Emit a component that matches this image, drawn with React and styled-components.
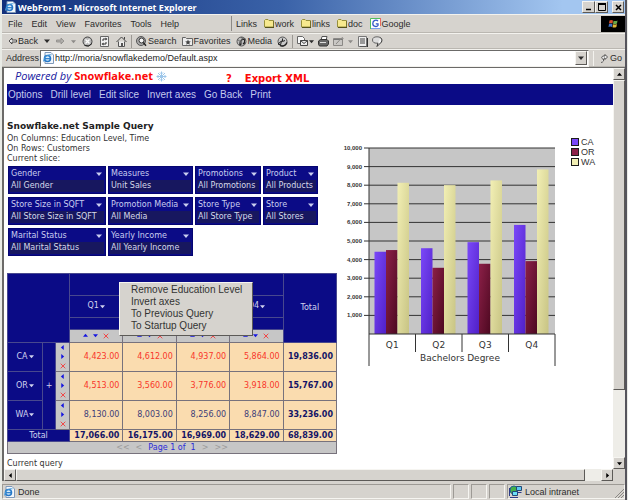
import React from 'react'
import styled, { createGlobalStyle, css } from 'styled-components'

const UI_FONT = '"Liberation Sans", Arial, sans-serif'
const PAGE_FONT = '"DejaVu Sans", Verdana, sans-serif'
const FACE = '#d6d3ce'
const NAVY = '#0b0b86'

const GlobalStyle = createGlobalStyle`
  * { box-sizing: border-box; }
  body { margin: 0; background: #e9ebe6; }
  button, input { font: inherit; color: inherit; margin: 0; padding: 0; border: 0; background: none; }
  a { color: inherit; text-decoration: none; }
`

const raised = css`
  background: ${FACE};
  border: 1px solid;
  border-color: #f6f5f1 #5c5a57 #5c5a57 #f6f5f1;
`

const Window = styled.div`
  display: flex;
  flex-direction: column;
  min-height: 100vh;
  margin: 0 1px 0 2px;
  background: ${FACE};
  border: solid #55545c;
  border-width: 0 2px 1px 0;
  font: 9px/12px ${UI_FONT};
  color: #2c2c2c;
`

const TitleBar = styled.header`
  display: flex;
  align-items: center;
  gap: 2px;
  height: 14px;
  padding: 0 1px 0 3px;
  background: linear-gradient(90deg, #12307c, #3a62a8 45%, #a3c6f0 90%);
  color: #fff;
  h1 {
    flex: 1;
    margin: 0;
    font: bold 9px/13px "Open Sans", Tahoma, sans-serif;
  }
`

const CaptionButton = styled.button`
  ${raised}
  width: ${p => (p.$spaced ? 12 : 13)}px;
  height: 12px;
  margin-left: ${p => (p.$spaced ? 2 : -2)}px;
  color: #000;
  svg { display: block; margin: auto; }
`

const Bar = styled.div`
  display: flex;
  align-items: center;
  height: ${p => p.$height}px;
  padding-left: ${p => p.$pad || 0}px;
  border-top: 1px solid #f3f2ee;
  border-bottom: 1px solid #bab7b1;
`

const MenuList = styled.nav`
  display: flex;
  width: 226px;
  gap: 9px;
  padding-left: 3px;
`

const LinksBar = styled.nav`
  display: flex;
  flex: 1;
  align-items: center;
  gap: 7px;
  height: 15px;
  padding-left: 4px;
  border-left: 1px solid #8c8a86;
`

const QuickLink = styled.a`
  display: flex;
  align-items: center;
  gap: 1px;
`

const Throbber = styled.div`
  display: flex;
  align-items: center;
  justify-content: center;
  width: 24px;
  height: 16px;
  background: #000;
`

const ToolGroup = styled.div`
  display: flex;
  align-items: center;
  gap: ${p => p.$gap}px;
  height: 13px;
  padding: 0 4px;
  & + & { border-left: 1px solid #9b9893; }
`

const ToolButton = styled.button`
  display: flex;
  align-items: center;
  gap: 1px;
  color: ${p => (p.disabled ? '#8d8b88' : 'inherit')};
`

const AddressBox = styled.div`
  display: flex;
  flex: 1;
  align-items: center;
  height: 17px;
  margin: 0 4px 0 1px;
  padding: 1px 1px 1px 2px;
  background: #fff;
  border: 1px solid;
  border-color: #6b6a68 #f3f2ee #f3f2ee #6b6a68;
  input {
    flex: 1;
    min-width: 0;
    margin-left: 1px;
    color: #222;
    outline: 0;
  }
`

const SquareButton = styled.button`
  ${raised}
  display: flex;
  flex: none;
  align-items: center;
  justify-content: center;
  width: 12px;
  height: ${p => p.$tall ? 14 : 12}px;
`

const GoButton = styled.button`
  display: flex;
  align-items: center;
  gap: 2px;
  width: 32px;
  height: 15px;
  padding-left: 6px;
  border-left: 1px solid #f3f2ee;
`

const Viewport = styled.div`
  display: grid;
  grid-template-columns: minmax(0, 1fr) 12px;
  grid-template-rows: 1fr 12px;
  flex: 1;
  border: solid #6b6a68;
  border-width: 1px 0 0 2px;
`

const Page = styled.main`
  padding-left: 3px;
  overflow: hidden;
  background: #fff;
  color: #333;
  font: 8px/10px ${PAGE_FONT};
`

const ScrollTrack = styled.div`
  display: flex;
  flex-direction: ${p => (p.$vertical ? 'column' : 'row')};
  background: #eeede8;
`

const ScrollThumb = styled.div`
  ${raised}
  flex: ${p => p.$size};
`

const ScrollRest = styled.div`
  flex: ${p => p.$size};
`

const StatusBar = styled.footer`
  display: flex;
  gap: 2px;
  height: 19px;
  padding: 3px 0 1px;
`

const StatusCell = styled.div`
  display: flex;
  flex: ${p => (p.$width ? `0 0 ${p.$width}px` : 1)};
  align-items: center;
  gap: 3px;
  padding-left: 1px;
  border: 1px solid;
  border-color: #9d9a95 #f6f5f1 #f6f5f1 #9d9a95;
`

const Grip = styled.svg`
  align-self: flex-end;
  margin-left: auto;
`

const BrandRow = styled.div`
  display: flex;
  height: 16px;
  color: #fc0808;
  font-weight: bold;
`

const Brand = styled.div`
  display: flex;
  align-items: center;
  gap: 3px;
  width: 219px;
  padding-left: 8px;
  font: bold 11px/16px "Open Sans", Tahoma, sans-serif;
  i {
    color: #1818a0;
    font-weight: normal;
  }
`

const BrandLink = styled.a`
  align-self: flex-end;
  margin-right: 13px;
  font-size: 10px;
  line-height: 11px;
`

const NavBar = styled.nav`
  display: flex;
  align-items: center;
  gap: 8px;
  height: 21px;
  padding-left: 1px;
  background: ${NAVY};
  color: #c3c9ee;
  font: 10px/12px ${UI_FONT};
`

const Columns = styled.div`
  display: flex;
  align-items: flex-start;
`

const QueryColumn = styled.section`
  flex: none;
  width: 330px;
  padding-top: 14px;
  h2 {
    margin: 0;
    color: #222;
    font-size: 9px;
    line-height: 15px;
  }
  p { margin: 0; }
`

const SliceGrid = styled.div`
  display: grid;
  grid-template-columns: 98px 85px 66px 55px;
  gap: 3px 2px;
  margin: 2px 0 17px 1px;
`

const SliceButton = styled.button`
  height: 28px;
  padding: 1px;
  background: ${NAVY};
  border: 1px solid #050570;
  color: #c9cdf0;
  text-align: left;
  white-space: nowrap;
  span {
    display: flex;
    align-items: center;
    justify-content: space-between;
    gap: 4px;
    height: 12px;
    padding-left: 1px;
  }
  span:first-child svg { margin-right: 2px; }
  span:last-child {
    background: #17175f;
    color: #d6d8ea;
  }
`

const PivotWrap = styled.div`
  position: relative;
`

const Pivot = styled.table`
  width: 100%;
  table-layout: fixed;
  border-collapse: collapse;
  th, td {
    padding: 0;
    border: 1px solid #77727c;
    line-height: 10px;
  }
  th {
    background: ${NAVY};
    border-color: #48488e;
    color: #d0d2ee;
    font-weight: normal;
  }
`

const Row = styled.tr`
  height: ${p => p.$height}px;
`

const MemberButton = styled.button`
  display: inline-flex;
  align-items: center;
  gap: 1px;
  vertical-align: middle;
`

const Num = styled.td`
  && { padding-right: 3px; }
  background: #fadcaf;
  color: ${p => (p.$low ? '#f8362a' : '#3c3c78')};
  text-align: right;
`

const Sum = styled(Num)`
  color: #141466;
  font-weight: bold;
`

const ToolCell = styled.td`
  background: #c6c6c6;
  div {
    display: flex;
    flex-direction: ${p => (p.$vertical ? 'column' : 'row')};
    align-items: center;
    justify-content: center;
    gap: ${p => (p.$vertical ? 3 : 5)}px;
  }
  button { display: block; line-height: 6px; }
`

const PagerCell = styled.td`
  background: #c6c6c6;
  color: #2c2cd8;
  div {
    display: flex;
    justify-content: center;
    gap: 6px;
  }
  button { color: #9b9b9b; }
`

const ContextMenu = styled.ul`
  ${raised}
  position: absolute;
  top: 9px;
  left: 112px;
  width: 134px;
  margin: 0;
  padding: 1px 0 3px 11px;
  color: #333;
  font: 10px/12px ${UI_FONT};
  list-style: none;
  li { height: 12px; }
`

const ChartArea = styled.figure`
  display: flex;
  flex: none;
  gap: 13px;
  margin: 31px 0 0 5px;
  svg { display: block; }
`

const Legend = styled.ul`
  margin: 0;
  padding: 1px 0 0;
  font: 9px/10px ${UI_FONT};
  list-style: none;
  li {
    display: flex;
    align-items: center;
    gap: 2px;
    height: 10px;
  }
`

const Swatch = styled.i`
  width: 8px;
  height: 8px;
  background: ${p => p.$color};
  border: 1px solid #1c1c1c;
`

const FinalLine = styled.p`
  && { margin-top: 5px; }
`

const Arrow = ({ dir = 'down', size = 5, color = 'currentColor' }) => {
  const turn = { down: 0, left: 90, up: 180, right: 270 }[dir]
  return (
    <svg width={size} height={size} viewBox='0 0 6 6' aria-hidden='true'>
      <path d='M0 1.5h6l-3 3.5z' fill={color} transform={`rotate(${turn} 3 3)`} />
    </svg>
  )
}

const Cross = () => (
  <svg width='6' height='6' viewBox='0 0 6 6' aria-hidden='true'>
    <path d='M.7.7l4.6 4.6M5.3.7L.7 5.3' stroke='#f04848' strokeWidth='1' />
  </svg>
)

const PageIcon = () => (
  <svg width='11' height='12' viewBox='0 0 11 12' aria-hidden='true'>
    <path d='M2 .5h6l2.5 2.5v8.5H2z' fill='#f2f7fc' stroke='#7f98b8' />
    <circle cx='4.5' cy='6.5' r='3' fill='#d9edfa' stroke='#2478c8' strokeWidth='1.6' />
    <path d='M2 6.7h5.5' stroke='#2478c8' strokeWidth='1.2' />
    <path d='M.5 9.5C1 5 5 2 8.5 2.8' fill='none' stroke='#4da0dc' />
  </svg>
)

const Folder = () => (
  <svg width='10' height='9' viewBox='0 0 10 9' aria-hidden='true'>
    <path d='M.5 8V1.5l1-1h2.5l1 1h4.5V8z' fill='#f7e98e' stroke='#97903c' />
    <path d='M1 8.5h9V2' fill='none' stroke='#55511c' />
  </svg>
)

const GoogleIcon = () => (
  <svg width='11' height='11' viewBox='0 0 11 11' aria-hidden='true'>
    <path d='M.5 11V.5H10' fill='none' stroke='#4fc05c' />
    <path d='M10.5 0v8' stroke='#e86a60' />
    <path d='M1 10.5h9.5' stroke='#7aa0ee' />
    <rect x='1' y='1' width='9' height='9' fill='#fff' />
    <path d='M8 3.2C6.5 1.3 2.8 1.9 2.8 5.500S7 9 8 7.500V5.800H5.800' fill='none' stroke='#3058c8' strokeWidth='1.3' />
  </svg>
)

const WindowsLogo = () => (
  <svg width='12' height='10' viewBox='0 0 12 10' aria-hidden='true'>
    <path d='M2.5 1.5Q4 .6 6 1.5L5.5 4.5Q3.8 3.7 2 4.5z' fill='#d8502c' />
    <path d='M6.6 1.7Q8.5 2.5 10.5 1.5L10 4.5Q8 5.4 6 4.7z' fill='#68a848' />
    <path d='M2 5Q3.7 4.2 5.4 5L5 8Q3.2 7.2 1.5 8z' fill='#3f74c8' />
    <path d='M6 5.2Q8 6 9.900 5L9.400 8Q7.500 8.900 5.500 8.200z' fill='#e0b838' />
  </svg>
)

const LeftArrow = ({ flip }) => (
  <svg width='9' height='8' viewBox='0 0 9 8' aria-hidden='true'>
    <path
      d='M4 1L1 4l3 3V5h4.5V3H4z' fill={flip ? '#b0aeab' : '#e8e8e8'} stroke='currentColor' strokeWidth='.8'
      transform={flip ? 'rotate(180 4.5 4)' : undefined}
    />
  </svg>
)

const icons = {
  stop: (
    <>
      <circle cx='5.5' cy='5.5' r='4.5' fill='#b9b9b9' stroke='#444' />
      <path d='M3.5 3.5l4 4M7.5 3.5l-4 4' stroke='#fff' strokeWidth='1.3' />
      <path d='M2.5 9.5Q7 11.5 10 7.5' fill='none' stroke='#222' />
    </>
  ),
  refresh: (
    <>
      <path d='M1.5.5h8v10h-8z' fill='#f1f1f1' stroke='#666' />
      <path d='M7 3H4v2M4 8h3V6' fill='none' stroke='#333' />
      <path d='M6.5 1.5L8.5 3 6.5 4.5zM4.5 6.5v3L2.5 8z' fill='#333' />
    </>
  ),
  home: (
    <>
      <path d='M2.5 5.5v5h6v-5' fill='#eee' stroke='#555' />
      <path d='M.5 6L5.5 1l5 5M8.5 3.5V1' fill='none' stroke='#444' />
      <path d='M5 7h2v3.5H5z' fill='#555' />
    </>
  ),
  search: (
    <>
      <circle cx='5' cy='5' r='4.5' fill='#aaa' stroke='#555' />
      <circle cx='5.5' cy='4.5' r='2.5' fill='#f4f4f4' stroke='#333' />
      <path d='M7.3 6.5L10 9.8' stroke='#222' strokeWidth='1.4' />
    </>
  ),
  favorites: (
    <>
      <path d='M.5 9.5v-8h3l1 1h6v7z' fill='#ececec' stroke='#666' />
      <path d='M6 3.5l.8 1.8 2 .2-1.5 1.2.5 2L6 7.7l-1.8 1 .5-2-1.5-1.2 2-.2z' fill='#444' />
    </>
  ),
  media: (
    <>
      <circle cx='5.5' cy='5.5' r='4.5' fill='#bdbdbd' stroke='#555' />
      <path d='M2 3.5Q5 5 3.5 8.5M5 1.5Q7 3 9.5 3' fill='none' stroke='#555' />
      <path d='M5 8.5V4l3.5-.7v4' fill='none' stroke='#222' />
      <circle cx='4.3' cy='8.5' r='1' fill='#222' />
      <circle cx='7.8' cy='7.5' r='1' fill='#222' />
    </>
  ),
  history: (
    <>
      <circle cx='5.5' cy='5.5' r='4.5' fill='#c9c9c9' stroke='#555' />
      <path d='M5.5 2.5v3l2.5-1M1 8L4.5 5l-1 4z' fill='none' stroke='#222' />
      <path d='M3 9.7Q8 11 10 6.5' fill='none' stroke='#222' strokeWidth='1.3' />
    </>
  ),
  mail: (
    <>
      <path d='M.5.5h5l2 2v5h-7z' fill='#fafafa' stroke='#666' />
      <path d='M3.5 4.5h7v5h-7z' fill='#ececec' stroke='#444' />
      <path d='M3.5 4.5L7 7.5l3.5-3' fill='none' stroke='#444' />
    </>
  ),
  print: (
    <>
      <path d='M3 4.5l1-4h5l-1 4' fill='#fff' stroke='#555' />
      <path d='M.5 5l2-1.5h6.5L10.5 5v3l-1.5 2H1.5L.5 8.5z' fill='#666' stroke='#333' />
      <path d='M2 6.5h6' stroke='#ddd' />
    </>
  ),
  edit: (
    <>
      <path d='M.5 2.5h9v7h-9z' fill='#c9c7c4' stroke='#8b8986' />
      <path d='M.5 3.5h9' stroke='#777' />
      <path d='M3 8l6-6.5 1.5 1' fill='none' stroke='#8b8986' />
    </>
  ),
  note: (
    <>
      <path d='M1.5.5h8v10h-8z' fill='#eee' stroke='#777' />
      <path d='M3 3h5M3 5h5M3 7h5' stroke='#444' />
      <path d='M10.5 2v9H3' fill='none' stroke='#333' />
    </>
  ),
  talk: (
    <>
      <ellipse cx='5' cy='4' rx='4.5' ry='3.2' fill='#ddd' stroke='#666' />
      <path d='M6 7l-1 3.5L9.5 6Q11 4 8.5 1.5' fill='#f3f3f3' stroke='#333' />
    </>
  )
}

const ToolIcon = ({ name }) => (
  <svg width='11' height='11' viewBox='0 0 11 11' aria-hidden='true'>{icons[name]}</svg>
)

const Snowflake = () => (
  <svg width='11' height='11' viewBox='0 0 11 11' aria-hidden='true'>
    <path
      d='M5.5.5v10M.5 5.5h10M2 2l7 7M9 2L2 9M4 1.5l1.5 1.5L7 1.5M4 9.5L5.5 8 7 9.5M1.5 4L3 5.5 1.5 7M9.5 4L8 5.5 9.5 7'
      fill='none' stroke='#9cc6ea' strokeWidth='1'
    />
  </svg>
)

const IntranetIcon = () => (
  <svg width='13' height='13' viewBox='0 0 13 13' aria-hidden='true'>
    <circle cx='5' cy='5' r='4' fill='#45b048' stroke='#206090' />
    <path d='M7.5 1.5h5v4h-5z' fill='#5cc8f0' stroke='#244878' />
    <path d='M3.5 6.5h5v4h-5z' fill='#6ce0f8' stroke='#244878' />
    <path d='M1 12.5h8M8 7.5h4.5M.5 3v8' stroke='#2c3c88' />
  </svg>
)

const menus = ['File', 'Edit', 'View', 'Favorites', 'Tools', 'Help']
const folders = ['work', 'links', 'doc']
const navItems = ['Options', 'Drill level', 'Edit slice', 'Invert axes', 'Go Back', 'Print']
const popupItems = ['Remove Education Level', 'Invert axes', 'To Previous Query', 'To Startup Query']

const slices = [
  ['Gender', 'All Gender'],
  ['Measures', 'Unit Sales'],
  ['Promotions', 'All Promotions'],
  ['Product', 'All Products'],
  ['Store Size in SQFT', 'All Store Size in SQFT'],
  ['Promotion Media', 'All Media'],
  ['Store Type', 'All Store Type'],
  ['Store', 'All Stores'],
  ['Marital Status', 'All Marital Status'],
  ['Yearly Income', 'All Yearly Income']
]

const quarters = ['Q1', 'Q2', 'Q3', 'Q4']
const rows = [
  { name: 'CA', values: [4423, 4612, 4937, 5864], total: 19836, low: true },
  { name: 'OR', values: [4513, 3560, 3776, 3918], total: 15767, low: true },
  { name: 'WA', values: [8130, 8003, 8256, 8847], total: 33236, low: false }
]
const totals = [17066, 16175, 16969, 18629, 68839]
const series = [
  { name: 'CA', from: '#7a48f8', to: '#5020c8' },
  { name: 'OR', from: '#8c2048', to: '#4c0820' },
  { name: 'WA', from: '#f2efb4', to: '#c8c484' }
]

const money = n => `${n.toLocaleString('en-US')}.00`

const Chart = () => {
  const left = 27
  const top = 12
  const height = 186
  const width = 186
  const bottom = top + height
  const group = width / quarters.length
  const bar = 11.5
  const ticks = Array.from({ length: 10 }, (_, i) => (i + 1) * 1000)
  const y = value => bottom - value * height / 10000
  return (
    <svg width='216' height='232' viewBox='0 0 216 232' role='img' aria-label='Bachelors Degree by quarter'>
      <defs>
        {series.map(s => (
          <linearGradient id={s.name} key={s.name} x1='0' y1='0' x2='1' y2='1'>
            <stop offset='0' stopColor={s.from} />
            <stop offset='1' stopColor={s.to} />
          </linearGradient>
        ))}
      </defs>
      <rect x={left} y={top} width={width} height={height} fill='#c6c6c6' />
      {ticks.map(t => (
        <g key={t}>
          <path d={`M${left - 5} ${y(t)}H${left + width}`} stroke='#333' />
          <text x={left - 7} y={y(t) + 2} textAnchor='end' fontSize='6' fontWeight='bold' fill='#333' fontFamily={UI_FONT}>
            {t.toLocaleString('en-US')}
          </text>
        </g>
      ))}
      {rows.map((row, r) => row.values.map((v, q) => (
        <rect
          key={row.name + q} fill={`url(#${row.name})`}
          x={left + q * group + 5.5 + r * bar} y={y(v)} width={bar} height={bottom - y(v)}
        />
      )))}
      <path d={`M${left} ${top}V${bottom + 32}M${left} ${bottom}h${width}v32`} fill='none' stroke='#333' />
      {quarters.map((q, i) => (
        <g key={q}>
          {i > 0 && <path d={`M${left + i * group} ${bottom}v18`} stroke='#333' />}
          <text x={left + (i + 0.5) * group} y={bottom + 14} textAnchor='middle' fontSize='9' fill='#333' fontFamily={PAGE_FONT}>{q}</text>
        </g>
      ))}
      <text x={left + width / 2 - 2} y={bottom + 27} textAnchor='middle' fontSize='9' fill='#333' fontFamily={PAGE_FONT}>Bachelors Degree</text>
    </svg>
  )
}

const PivotTable = () => (
  <PivotWrap>
    <Pivot>
      <colgroup>
        <col style={{ width: 35 }} />
        <col style={{ width: 13 }} />
        <col style={{ width: 14 }} />
        <col span='5' />
      </colgroup>
      <thead>
        <Row $height={22}>
          <th colSpan='3' rowSpan='4' />
          <th colSpan='4' />
          <th rowSpan='4' scope='col'>Total</th>
        </Row>
        <Row $height={22}>
          {quarters.map(q => (
            <th key={q} scope='col'><MemberButton>{q}<Arrow /></MemberButton></th>
          ))}
        </Row>
        <Row $height={12}><th colSpan='4' /></Row>
        <Row $height={13}>
          {quarters.map(q => (
            <ToolCell key={q}>
              <div>
                <button aria-label='Sort up'><Arrow dir='up' color='#1414e0' /></button>
                <button aria-label='Sort down'><Arrow color='#1414e0' /></button>
                <button aria-label='Remove'><Cross /></button>
              </div>
            </ToolCell>
          ))}
        </Row>
      </thead>
      <tbody>
        {rows.map((row, i) => (
          <Row $height={29} key={row.name}>
            <th scope='row'><MemberButton>{row.name}<Arrow /></MemberButton></th>
            {i === 0 && <th rowSpan='3'><button>+</button></th>}
            <ToolCell $vertical>
              <div>
                <button aria-label='Sort left'><Arrow dir='left' color='#1414e0' /></button>
                <button aria-label='Sort right'><Arrow dir='right' color='#1414e0' /></button>
                <button aria-label='Remove'><Cross /></button>
              </div>
            </ToolCell>
            {row.values.map((v, q) => <Num $low={row.low} key={q}>{money(v)}</Num>)}
            <Sum>{money(row.total)}</Sum>
          </Row>
        ))}
        <Row $height={12}>
          <th colSpan='3' scope='row'>Total</th>
          {totals.map(t => <Sum key={t}>{money(t)}</Sum>)}
        </Row>
      </tbody>
      <tfoot>
        <Row $height={12}>
          <PagerCell colSpan='8'>
            <div>
              <button>&lt;&lt;</button>
              <button>&lt;</button>
              <span>Page 1 of &nbsp;1</span>
              <button>&gt;</button>
              <button>&gt;&gt;</button>
            </div>
          </PagerCell>
        </Row>
      </tfoot>
    </Pivot>
    <ContextMenu>
      {popupItems.map(item => <li key={item}><button>{item}</button></li>)}
    </ContextMenu>
  </PivotWrap>
)

const App = () => (
  <>
    <GlobalStyle />
    <Window>
      <TitleBar>
        <PageIcon />
        <h1>WebForm1 - Microsoft Internet Explorer</h1>
        <CaptionButton aria-label='Minimize'>
          <svg width='7' height='8' viewBox='0 0 7 8'><path d='M1 6.5h5' stroke='#000' strokeWidth='1.5' /></svg>
        </CaptionButton>
        <CaptionButton aria-label='Maximize'>
          <svg width='8' height='8' viewBox='0 0 8 8'><path d='M.5 1h7v6.5h-7z' fill='none' stroke='#000' /><path d='M0 1h8' stroke='#000' strokeWidth='2' /></svg>
        </CaptionButton>
        <CaptionButton $spaced aria-label='Close'>
          <svg width='7' height='7' viewBox='0 0 7 7'><path d='M1 1l5 5M6 1L1 6' stroke='#000' strokeWidth='1.5' /></svg>
        </CaptionButton>
      </TitleBar>

      <Bar $height={19} $pad={3}>
        <MenuList>
          {menus.map(m => <button key={m}>{m}</button>)}
        </MenuList>
        <LinksBar>
          <span>Links</span>
          {folders.map(f => <QuickLink href={`#${f}`} key={f}><Folder />{f}</QuickLink>)}
          <QuickLink href='#google'><GoogleIcon />Google</QuickLink>
        </LinksBar>
        <Throbber><WindowsLogo /></Throbber>
      </Bar>

      <Bar $height={16} $pad={2}>
        <ToolGroup $gap={6}>
          <ToolButton><LeftArrow />Back</ToolButton>
          <ToolButton aria-label='Back list'><Arrow size={6} /></ToolButton>
          <ToolButton aria-label='Forward' disabled><LeftArrow flip /></ToolButton>
          <ToolButton aria-label='Forward list' disabled><Arrow /></ToolButton>
          <ToolButton aria-label='Stop'><ToolIcon name='stop' /></ToolButton>
          <ToolButton aria-label='Refresh'><ToolIcon name='refresh' /></ToolButton>
          <ToolButton aria-label='Home'><ToolIcon name='home' /></ToolButton>
        </ToolGroup>
        <ToolGroup $gap={5}>
          <ToolButton><ToolIcon name='search' />Search</ToolButton>
          <ToolButton><ToolIcon name='favorites' />Favorites</ToolButton>
          <ToolButton><ToolIcon name='media' />Media</ToolButton>
          <ToolButton aria-label='History'><ToolIcon name='history' /></ToolButton>
        </ToolGroup>
        <ToolGroup $gap={4}>
          <ToolButton aria-label='Mail'><ToolIcon name='mail' /><Arrow /></ToolButton>
          <ToolButton aria-label='Print'><ToolIcon name='print' /></ToolButton>
          <ToolButton aria-label='Edit' disabled><ToolIcon name='edit' /></ToolButton>
          <ToolButton aria-label='Edit list' disabled><Arrow /></ToolButton>
          <ToolButton aria-label='Notes'><ToolIcon name='note' /></ToolButton>
          <ToolButton aria-label='Discuss'><ToolIcon name='talk' /></ToolButton>
        </ToolGroup>
      </Bar>

      <Bar $height={18} $pad={4}>
        <label htmlFor='address'>Address</label>
        <AddressBox>
          <PageIcon />
          <input id='address' defaultValue='http://moria/snowflakedemo/Default.aspx' />
          <SquareButton $tall aria-label='Recent addresses'><Arrow size={6} /></SquareButton>
        </AddressBox>
        <GoButton>
          <svg width='8' height='9' viewBox='0 0 8 9' aria-hidden='true'>
            <path d='M1 8.5C3.5 8 4 6.5 3.5 5 1.5 5 1 3 3 2h2V.5L7.5 3 5 5.5V4H4' fill='#eee' stroke='#333' strokeWidth='.8' />
          </svg>
          Go
        </GoButton>
      </Bar>

      <Viewport>
        <Page>
          <BrandRow>
            <Brand><i>Powered by</i>Snowflake.net<Snowflake /></Brand>
            <BrandLink href='#help'>?</BrandLink>
            <BrandLink href='#export'>Export XML</BrandLink>
          </BrandRow>
          <NavBar>
            {navItems.map(item => <a href='#nav' key={item}>{item}</a>)}
          </NavBar>
          <Columns>
            <QueryColumn>
              <h2>Snowflake.net Sample Query</h2>
              <p>On Columns: Education Level, Time</p>
              <p>On Rows: Customers</p>
              <p>Current slice:</p>
              <SliceGrid>
                {slices.map(([name, value]) => (
                  <SliceButton key={name}>
                    <span>{name}<Arrow size={6} /></span>
                    <span>{value}</span>
                  </SliceButton>
                ))}
              </SliceGrid>
              <PivotTable />
              <FinalLine>Current query</FinalLine>
            </QueryColumn>
            <ChartArea>
              <Chart />
              <Legend>
                {series.map(s => <li key={s.name}><Swatch $color={s.from} />{s.name}</li>)}
              </Legend>
            </ChartArea>
          </Columns>
        </Page>
        <ScrollTrack $vertical>
          <SquareButton aria-label='Scroll up'><Arrow dir='up' color='#000' /></SquareButton>
          <ScrollThumb $size={308} />
          <ScrollRest $size={67} />
          <SquareButton aria-label='Scroll down'><Arrow color='#000' /></SquareButton>
        </ScrollTrack>
        <ScrollTrack>
          <SquareButton aria-label='Scroll left'><Arrow dir='left' color='#000' /></SquareButton>
          <ScrollThumb $size={566} />
          <ScrollRest $size={16} />
          <SquareButton aria-label='Scroll right'><Arrow dir='right' color='#000' /></SquareButton>
        </ScrollTrack>
      </Viewport>

      <StatusBar>
        <StatusCell><PageIcon />Done</StatusCell>
        <StatusCell $width={16} />
        <StatusCell $width={16} />
        <StatusCell $width={16} />
        <StatusCell $width={118}>
          <IntranetIcon />Local intranet
          <Grip width='9' height='9' viewBox='0 0 9 9' aria-hidden='true'>
            <path d='M0 9L9 0M3 9l6-6M6 9l3-3' stroke='#8a8884' />
          </Grip>
        </StatusCell>
      </StatusBar>
    </Window>
  </>
)

export default App
